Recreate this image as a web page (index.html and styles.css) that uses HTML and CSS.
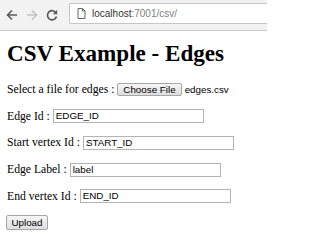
FILE: index.html
```html
<!DOCTYPE html>
<html>
<head>
<meta charset="utf-8">
<title>CSV Example - Edges</title>
<link rel="stylesheet" href="styles.css">
</head>
<body>
<div class="chrome">
  <div class="nav">
    <svg class="navicon" width="14" height="14" viewBox="0 0 14 14"><path d="M12 7H3M7 2.5L2.5 7 7 11.5" fill="none" stroke="#5a5a5a" stroke-width="1.6"/></svg>
    <svg class="navicon" width="14" height="14" viewBox="0 0 14 14"><path d="M2 7h9M7 2.5L11.5 7 7 11.5" fill="none" stroke="#c4c4c4" stroke-width="1.6"/></svg>
    <svg class="navicon" width="14" height="14" viewBox="0 0 14 14"><path d="M11.2 5.2A4.6 4.6 0 1 0 11.5 8.5" fill="none" stroke="#5a5a5a" stroke-width="1.7"/><path d="M12.2 1.8v4.4H7.8z" fill="#5a5a5a"/></svg>
  </div>
  <div class="omnibox">
    <svg class="pageicon" width="9" height="11" viewBox="0 0 9 11"><path d="M1 .5h4.5L8 3v7.5H1z" fill="#fff" stroke="#666"/><path d="M5.5 .5V3H8" fill="none" stroke="#666"/></svg>
    <span class="host">localhost</span><span class="path">:7001/csv/</span>
  </div>
</div>
<div class="page">
  <h1 class="title">CSV Example - Edges</h1>
  <form class="form">
    <p class="row">Select a file for edges : <span class="filebtn">Choose File</span><span class="filename">edges.csv</span></p>
    <p class="row">Edge Id : <span class="field">EDGE_ID</span></p>
    <p class="row">Start vertex Id : <span class="field">START_ID</span></p>
    <p class="row">Edge Label : <span class="field">label</span></p>
    <p class="row">End vertex Id : <span class="field">END_ID</span></p>
    <p class="row"><span class="btn">Upload</span></p>
  </form>
</div>
</body>
</html>
```

FILE: styles.css
```css
html, body {
  margin: 0;
  padding: 0;
  background: #fff;
}
body {
  width: 267px;
  height: 237px;
  overflow: hidden;
  font-family: "Liberation Serif", "Times New Roman", serif;
  color: #000;
}
.chrome {
  height: 30px;
  background: #f2f2f2;
  border-bottom: 1px solid #c9c9c9;
  display: flex;
  align-items: center;
  box-sizing: content-box;
}
.nav {
  display: flex;
  align-items: center;
  gap: 6px;
  padding-left: 5px;
  width: 64px;
  flex: none;
}
.navicon {
  display: block;
}
.omnibox {
  flex: 1;
  height: 19px;
  margin-top: -3px;
  background: #fff;
  border: 1px solid #c6c6c6;
  border-right: none;
  border-radius: 2px 0 0 2px;
  display: flex;
  align-items: center;
  padding-left: 7px;
  font-family: "Liberation Sans", Arial, sans-serif;
  font-size: 10px;
}
.pageicon {
  margin-right: 6px;
  flex: none;
}
.host {
  color: #333;
}
.path {
  color: #808080;
}
.page {
  padding: 0 7px;
}
.title {
  margin: 9px 0 0;
  font-size: 23.1px;
  line-height: 26px;
  font-weight: bold;
}
.form {
  margin: 0;
  padding-top: 16px;
  display: flex;
  flex-direction: column;
  gap: 11.7px;
}
.row {
  margin: 0;
  height: 15px;
  display: flex;
  align-items: center;
  white-space: pre;
  font-size: 11.7px;
}
.field {
  box-sizing: border-box;
  width: 151px;
  height: 14px;
  border: 1px solid #b4b4b4;
  padding: 0 2px;
  font-family: "Liberation Sans", Arial, sans-serif;
  font-size: 9.8px;
  line-height: 12px;
  color: #000;
  background: #fff;
}
.filebtn, .btn {
  box-sizing: border-box;
  height: 13px;
  padding: 0 5px;
  border: 1px solid #a6a6a6;
  border-radius: 2px;
  background: linear-gradient(#f6f6f6, #dedede);
  font-family: "Liberation Sans", Arial, sans-serif;
  font-size: 9.8px;
  line-height: 11px;
  color: #000;
}
.filename {
  margin-left: 3px;
  font-family: "Liberation Sans", Arial, sans-serif;
  font-size: 9.8px;
}
.btn {
  height: 15px;
  line-height: 13px;
  width: 42px;
  margin-left: -1px;
  text-align: center;
  padding: 0;
}
```
